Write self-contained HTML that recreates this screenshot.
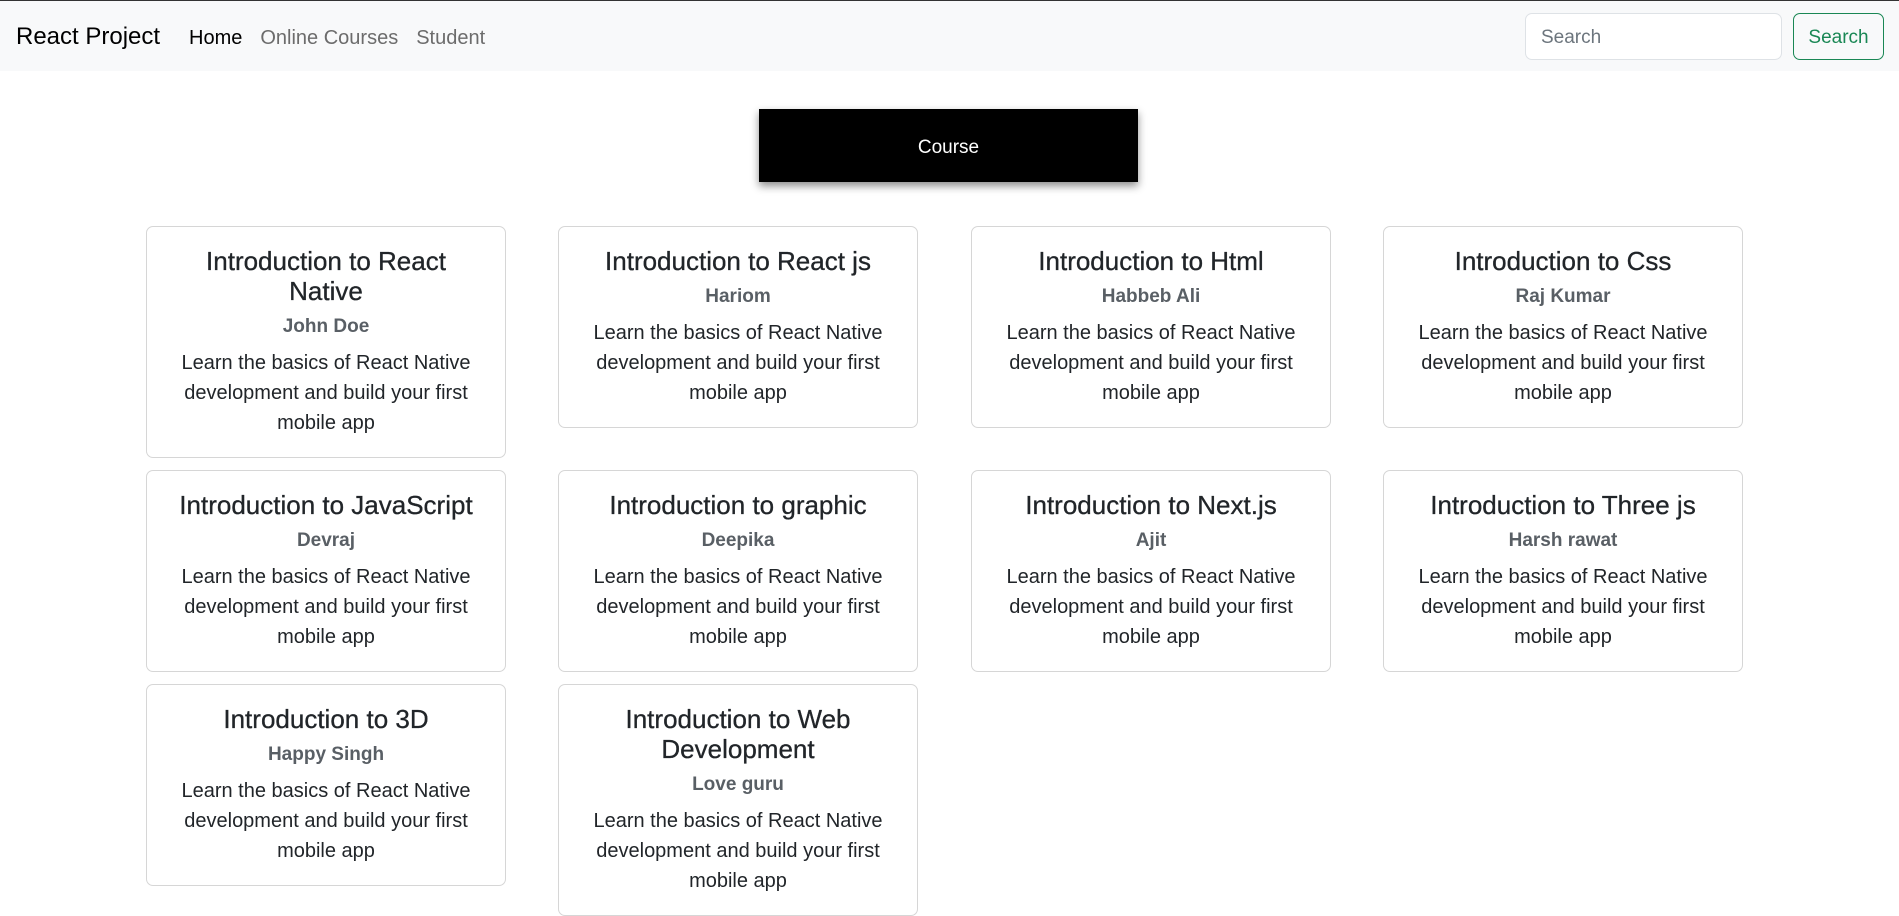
<!DOCTYPE html>
<html><head><meta charset="utf-8"><style>
*{box-sizing:border-box;margin:0;padding:0}
body{width:1899px;height:869px;overflow:hidden;background:#fff;font-family:"Segoe UI","Liberation Sans",sans-serif;color:#212529;border-top:1px solid #333}
nav{height:70px;background:#f8f9fa;position:relative}
.brand{position:absolute;left:16px;top:22px;font-size:24px;color:#000}
.links{position:absolute;left:189px;top:26px;font-size:20px}
.links span{margin-right:18px;color:#6c6c6c}
.links span:first-child{color:#000}
.inp{position:absolute;left:1525px;top:12px;width:257px;height:47px;background:#fff;border:1px solid #dee2e6;border-radius:7px;font-size:19px;color:#6c757d;padding:13px 15px 0}
.btn{position:absolute;left:1793px;top:12px;width:91px;height:47px;border:1px solid #198754;border-radius:7px;font-size:19px;color:#198754;text-align:center;line-height:47px}
.course{position:absolute;left:759px;top:109px;width:379px;height:73px;background:#000;color:#fff;font-size:19px;text-align:center;line-height:78px;box-shadow:0 4px 8px rgba(0,0,0,.45)}
.card{position:absolute;width:360px;border:1px solid #d6d6d6;border-radius:7px;padding:19px 18px;text-align:center}
.card h5{font-size:26px;font-weight:normal;line-height:30px;-webkit-text-stroke:0.3px #212529}
.card h6{font-size:19px;font-weight:600;color:#595f65;line-height:30px;margin-top:6px}
.card p{font-size:20px;line-height:30px;margin-top:6px}
</style></head><body>
<nav><div class="brand">React Project</div><div class="links"><span>Home</span><span>Online Courses</span><span>Student</span></div>
<div class="inp">Search</div><div class="btn">Search</div></nav>
<div class="course">Course</div>
<div class="card" style="left:146px;top:226px"><h5>Introduction to React<br>Native</h5><h6>John Doe</h6><p>Learn the basics of React Native development and build your first mobile app</p></div>
<div class="card" style="left:558px;top:226px"><h5>Introduction to React js</h5><h6>Hariom</h6><p>Learn the basics of React Native development and build your first mobile app</p></div>
<div class="card" style="left:971px;top:226px"><h5>Introduction to Html</h5><h6>Habbeb Ali</h6><p>Learn the basics of React Native development and build your first mobile app</p></div>
<div class="card" style="left:1383px;top:226px"><h5>Introduction to Css</h5><h6>Raj Kumar</h6><p>Learn the basics of React Native development and build your first mobile app</p></div>
<div class="card" style="left:146px;top:470px"><h5>Introduction to JavaScript</h5><h6>Devraj</h6><p>Learn the basics of React Native development and build your first mobile app</p></div>
<div class="card" style="left:558px;top:470px"><h5>Introduction to graphic</h5><h6>Deepika</h6><p>Learn the basics of React Native development and build your first mobile app</p></div>
<div class="card" style="left:971px;top:470px"><h5>Introduction to Next.js</h5><h6>Ajit</h6><p>Learn the basics of React Native development and build your first mobile app</p></div>
<div class="card" style="left:1383px;top:470px"><h5>Introduction to Three js</h5><h6>Harsh rawat</h6><p>Learn the basics of React Native development and build your first mobile app</p></div>
<div class="card" style="left:146px;top:684px"><h5>Introduction to 3D</h5><h6>Happy Singh</h6><p>Learn the basics of React Native development and build your first mobile app</p></div>
<div class="card" style="left:558px;top:684px"><h5>Introduction to Web<br>Development</h5><h6>Love guru</h6><p>Learn the basics of React Native development and build your first mobile app</p></div>
</body></html>
